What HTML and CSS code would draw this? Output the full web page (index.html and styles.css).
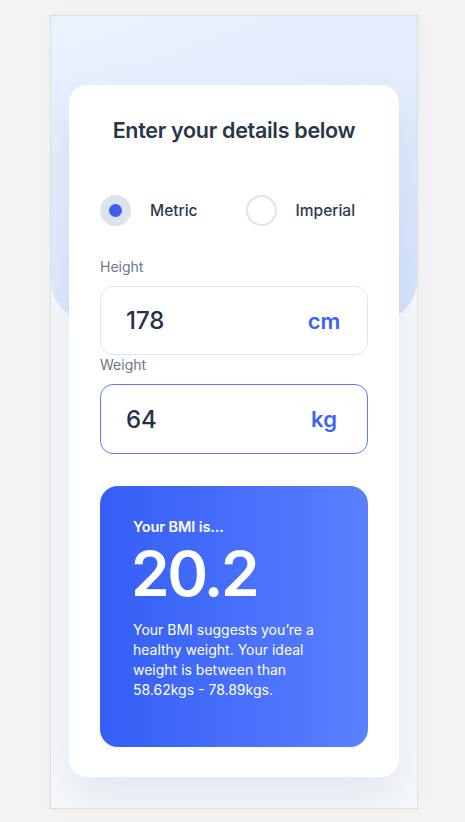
FILE: index.html
```html
<!DOCTYPE html>
<html lang="en">
<head>
<meta charset="utf-8">
<title>BMI Calculator</title>
<link rel="stylesheet" href="styles.css">
</head>
<body>
<main class="frame">
  <section class="card">
    <h1 class="title">Enter your details below</h1>
    <div class="units">
      <label class="option">
        <span class="radio radio-checked"><span class="radio-dot"></span></span>
        <span class="option-label">Metric</span>
      </label>
      <label class="option">
        <span class="radio"></span>
        <span class="option-label">Imperial</span>
      </label>
    </div>
    <div class="group">
      <div class="field-label">Height</div>
      <div class="field">
        <input class="field-input" type="text" value="178">
        <span class="unit">cm</span>
      </div>
    </div>
    <div class="group">
      <div class="field-label">Weight</div>
      <div class="field field-focus">
        <input class="field-input" type="text" value="64">
        <span class="unit">kg</span>
      </div>
    </div>
    <div class="result">
      <div class="result-head">Your BMI is...</div>
      <div class="result-value">20.2</div>
      <p class="result-text">Your BMI suggests you’re a healthy weight. Your ideal weight is between than 58.62kgs - 78.89kgs.</p>
    </div>
  </section>
</main>
</body>
</html>
```

FILE: styles.css
```css
* { box-sizing: border-box; }

html, body {
  margin: 0;
  padding: 0;
}

body {
  background: #f3f4f3;
  font-family: Inter, "Noto Sans", sans-serif;
  padding: 15px 0 13px 50px;
}

.frame {
  position: relative;
  width: 368px;
  border: 1px solid #dcdddd;
  background: #f8fafc;
  padding: 69px 18px 31px;
  box-shadow: 0 0 18px rgba(0, 0, 0, 0.04);
  overflow: hidden;
}

.frame::before {
  content: "";
  position: absolute;
  left: 0;
  right: 0;
  top: 0;
  height: 305px;
  border-radius: 0 0 40px 40px;
  background: linear-gradient(160deg, #eaf2fe 0%, #e2ecfc 50%, #d6e4fa 100%);
}

.card {
  position: relative;
  background: #ffffff;
  border-radius: 18px;
  padding: 30px 31px 30px;
  box-shadow: 0 22px 44px rgba(45, 80, 150, 0.11);
}

.title {
  margin: 0;
  text-align: center;
  font-size: 21.5px;
  line-height: 30px;
  font-weight: 600;
  color: #28364a;
  letter-spacing: -0.3px;
}

.units {
  display: flex;
  gap: 48px;
  margin-top: 50px;
}

.option {
  display: flex;
  align-items: center;
  gap: 19px;
}

.radio {
  width: 31px;
  height: 31px;
  border-radius: 50%;
  border: 2px solid #dfe5ec;
  background: #ffffff;
  display: flex;
  align-items: center;
  justify-content: center;
}

.radio-checked {
  background: #dde3ea;
  border-color: #dde3ea;
}

.radio-dot {
  width: 13px;
  height: 13px;
  border-radius: 50%;
  background: #3c5ef5;
}

.option-label {
  font-size: 15.5px;
  font-weight: 500;
  color: #2c394c;
}

.units + .group {
  margin-top: 31px;
}

.field-label {
  font-size: 14px;
  line-height: 20px;
  color: #6b778a;
  margin-bottom: 9px;
}

.field {
  display: flex;
  align-items: center;
  height: 69px;
  border: 1px solid #e1e6ed;
  border-radius: 13px;
  padding: 0 21px 0 25px;
}

.field-focus {
  height: 70px;
  border-color: #5b7cf5;
}

.field-input {
  flex: 1;
  min-width: 0;
  border: none;
  outline: none;
  background: transparent;
  padding: 0;
  font-family: inherit;
  font-size: 24px;
  font-weight: 500;
  color: #243246;
}

.unit {
  width: 44px;
  text-align: center;
  font-size: 22px;
  font-weight: 600;
  color: #3d65f3;
}

.result {
  margin-top: 32px;
  border-radius: 18px;
  padding: 31px 32px 46px 33px;
  background: linear-gradient(90deg, #345ef6 0%, #4a72fb 60%, #5a81fe 100%);
  color: #ffffff;
}

.result-head {
  font-size: 14.5px;
  line-height: 20px;
  font-weight: 600;
  letter-spacing: -0.1px;
}

.result-value {
  margin: -1.5px 0 0 -2px;
  font-size: 62px;
  line-height: 76px;
  font-weight: 600;
  letter-spacing: -2.5px;
}

.result-text {
  margin: 8px 0 0;
  font-size: 14px;
  line-height: 20.3px;
  max-width: 190px;
}
```
